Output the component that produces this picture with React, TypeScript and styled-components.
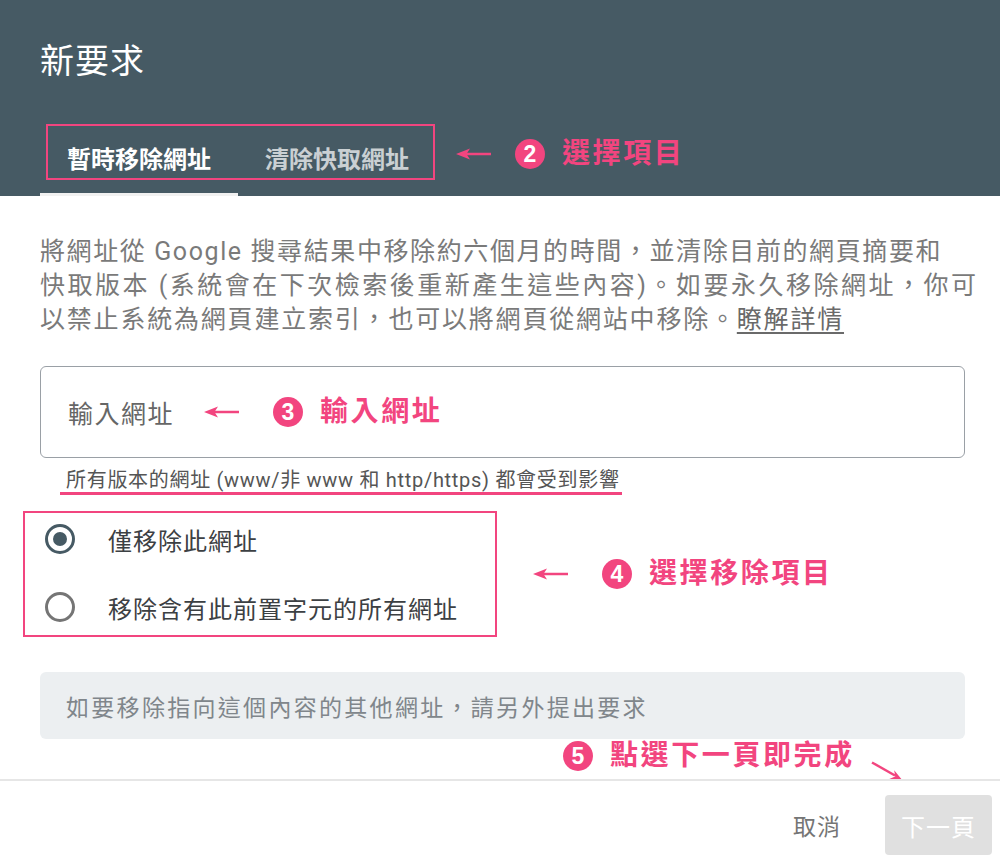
import styled, { createGlobalStyle } from 'styled-components';

const PINK = '#f2457f';
const SLATE = '#465a64';

const GlobalStyle = createGlobalStyle`
  html, body {
    margin: 0;
    padding: 0;
    background: #fff;
  }
  body {
    font-family: Roboto, "Noto Sans CJK TC", "Noto Sans", sans-serif;
  }
  * {
    box-sizing: border-box;
  }
`;

const Dialog = styled.div`
  width: 1000px;
  height: 866px;
  display: flex;
  flex-direction: column;
  background: #fff;
  overflow: hidden;
`;

const Header = styled.header`
  height: 196px;
  background: ${SLATE};
  padding: 41px 0 0 40px;
  display: flex;
  flex-direction: column;
`;

const Title = styled.h1`
  margin: 0;
  font-size: 34px;
  line-height: 40px;
  font-weight: 400;
  letter-spacing: 1px;
  color: #fff;
`;

const TabsRow = styled.div`
  margin-top: auto;
  display: flex;
  align-items: center;
`;

const TabGroup = styled.div`
  position: relative;
  display: flex;
  height: 74px;
`;

const Tab = styled.div<{ $active?: boolean }>`
  display: flex;
  align-items: center;
  padding: 0 27px;
  font-size: 24px;
  font-weight: 700;
  color: ${(p) => (p.$active ? '#fff' : 'rgba(255,255,255,0.72)')};
  border-bottom: 3px solid ${(p) => (p.$active ? '#f1f1f1' : 'transparent')};
`;

// pink outline drawn over the tabs
const TabHighlight = styled.div`
  position: absolute;
  left: 6px;
  top: 2px;
  width: 389px;
  height: 56px;
  border: 2px solid ${PINK};
  pointer-events: none;
`;

const Note = styled.div<{ $lift?: number; $offset?: number }>`
  display: flex;
  align-items: center;
  margin-left: ${(p) => p.$offset ?? 0}px;
  margin-bottom: ${(p) => p.$lift ?? 0}px;
`;

const ArrowIcon = styled.svg<{ $gap: number }>`
  display: block;
  margin-right: ${(p) => p.$gap}px;
`;

const Badge = styled.span`
  width: 30px;
  height: 30px;
  border-radius: 50%;
  background: ${PINK};
  color: #fff;
  display: flex;
  align-items: center;
  justify-content: center;
  font-family: "Liberation Sans", Arial, sans-serif;
  font-weight: 700;
  font-size: 23px;
  margin-right: 17px;
  flex-shrink: 0;
`;

const NoteLabel = styled.span`
  font-size: 28px;
  font-weight: 700;
  line-height: 1;
  letter-spacing: 2.6px;
  color: ${PINK};
  white-space: nowrap;
`;

const DiagArrow = styled.svg`
  display: block;
  align-self: flex-start;
  margin: 21px 0 0 16px;
`;

const Body = styled.main`
  flex: 1;
  display: flex;
  flex-direction: column;
  padding: 39px 35px 0 40px;
`;

const Desc = styled.p`
  margin: 0;
  font-size: 25px;
  line-height: 34px;
  color: #7a7a7a;
  white-space: nowrap;
`;

const DescLine = styled.span<{ $tracking: number }>`
  display: block;
  letter-spacing: ${(p) => p.$tracking}px;
`;

const LearnMore = styled.a`
  color: #6a6a6a;
  text-decoration: underline;
  text-underline-offset: 4px;
`;

const InputBox = styled.div`
  margin-top: 29px;
  height: 92px;
  border: 1.5px solid #9aa0a6;
  border-radius: 6px;
  display: flex;
  align-items: center;
  padding-left: 27px;
`;

const Placeholder = styled.span`
  font-size: 25px;
  letter-spacing: 1.5px;
  color: #666;
  margin-right: 30px;
`;

const Helper = styled.div`
  align-self: flex-start;
  margin: 10px 0 0 20px;
  padding: 0 2px 0 6px;
  font-size: 20px;
  line-height: 24px;
  letter-spacing: 0.7px;
  color: #555;
  border-bottom: 3px solid ${PINK};
`;

const RadioSection = styled.div`
  display: flex;
  align-items: center;
  margin: 16px 0 0 -17px;
`;

const RadioGroup = styled.div`
  width: 474px;
  border: 2px solid ${PINK};
  padding: 0 0 2px 20px;
  display: flex;
  flex-direction: column;
  gap: 16px;
  margin-right: 36px;
`;

const RadioRow = styled.label`
  height: 52px;
  display: flex;
  align-items: center;
  gap: 33px;
  font-size: 24px;
  letter-spacing: 1px;
  color: #3c4043;
`;

const Ring = styled.span<{ $checked?: boolean }>`
  width: 30px;
  height: 30px;
  border-radius: 50%;
  border: 3px solid ${(p) => (p.$checked ? SLATE : '#757575')};
  display: flex;
  align-items: center;
  justify-content: center;
  flex-shrink: 0;
`;

const Dot = styled.span`
  width: 14px;
  height: 14px;
  border-radius: 50%;
  background: ${SLATE};
`;

const InfoBox = styled.div`
  margin-top: 35px;
  height: 67px;
  background: #eceff1;
  border-radius: 6px;
  display: flex;
  align-items: center;
  padding-left: 26px;
  font-size: 23px;
  letter-spacing: 2.3px;
  color: #80868b;
`;

const FinalRow = styled.div`
  height: 32px;
  margin-top: 1px;
  padding-left: 523px;
  display: flex;
  align-items: center;
`;

const Footer = styled.footer`
  border-top: 2px solid #e6e6e6;
  display: flex;
  justify-content: flex-end;
  align-items: center;
  padding: 14px 8px 11px 0;
`;

const CancelButton = styled.button`
  background: none;
  border: none;
  padding: 0 44px 0 0;
  font-family: inherit;
  font-size: 23px;
  letter-spacing: 1px;
  color: #757575;
`;

const NextButton = styled.button`
  width: 107px;
  height: 60px;
  border: none;
  border-radius: 4px;
  background: #e0e0e0;
  color: #fff;
  font-family: inherit;
  font-size: 24px;
  letter-spacing: 1px;
`;

const LeftArrow = ({ gap }: { gap: number }) => (
  <ArrowIcon $gap={gap} width="36" height="14" viewBox="0 0 36 14">
    <line x1="9" y1="7" x2="35" y2="7" stroke={PINK} strokeWidth="2.5" />
    <polygon points="0,7 14,1.5 10.5,7 14,12.5" fill={PINK} />
  </ArrowIcon>
);

const Step = ({ n, label, gap = 33, lift, offset }: { n: number; label: string; gap?: number; lift?: number; offset?: number }) => (
  <Note $lift={lift} $offset={offset}>
    <LeftArrow gap={gap} />
    <Badge>{n}</Badge>
    <NoteLabel>{label}</NoteLabel>
  </Note>
);

const App = () => {
  return (
    <>
      <GlobalStyle />
      <Dialog>
        <Header>
          <Title>新要求</Title>
          <TabsRow>
            <TabGroup>
              <Tab $active>暫時移除網址</Tab>
              <Tab>清除快取網址</Tab>
              <TabHighlight />
            </TabGroup>
            <Step n={2} label="選擇項目" gap={23} lift={10} offset={20} />
          </TabsRow>
        </Header>

        <Body>
          <Desc>
            <DescLine $tracking={1.6}>將網址從 Google 搜尋結果中移除約六個月的時間，並清除目前的網頁摘要和</DescLine>
            <DescLine $tracking={2.5}>快取版本 (系統會在下次檢索後重新產生這些內容)。如要永久移除網址，你可</DescLine>
            <DescLine $tracking={1.8}>
              以禁止系統為網頁建立索引，也可以將網頁從網站中移除。<LearnMore>瞭解詳情</LearnMore>
            </DescLine>
          </Desc>

          <InputBox>
            <Placeholder>輸入網址</Placeholder>
            <Step n={3} label="輸入網址" />
          </InputBox>
          <Helper>所有版本的網址 (www/非 www 和 http/https) 都會受到影響</Helper>

          <RadioSection>
            <RadioGroup>
              <RadioRow>
                <Ring $checked>
                  <Dot />
                </Ring>
                僅移除此網址
              </RadioRow>
              <RadioRow>
                <Ring />
                移除含有此前置字元的所有網址
              </RadioRow>
            </RadioGroup>
            <Step n={4} label="選擇移除項目" />
          </RadioSection>

          <InfoBox>如要移除指向這個內容的其他網址，請另外提出要求</InfoBox>

          <FinalRow>
            <Badge>5</Badge>
            <NoteLabel>點選下一頁即完成</NoteLabel>
            <DiagArrow width="34" height="22" viewBox="0 0 34 22">
              <line x1="1" y1="1.5" x2="24" y2="14.5" stroke={PINK} strokeWidth="2.5" />
              <polygon points="32,20 18.3,18 24.2,15.6 23.2,9.3" fill={PINK} />
            </DiagArrow>
          </FinalRow>
        </Body>

        <Footer>
          <CancelButton>取消</CancelButton>
          <NextButton>下一頁</NextButton>
        </Footer>
      </Dialog>
    </>
  );
};

export default App;
